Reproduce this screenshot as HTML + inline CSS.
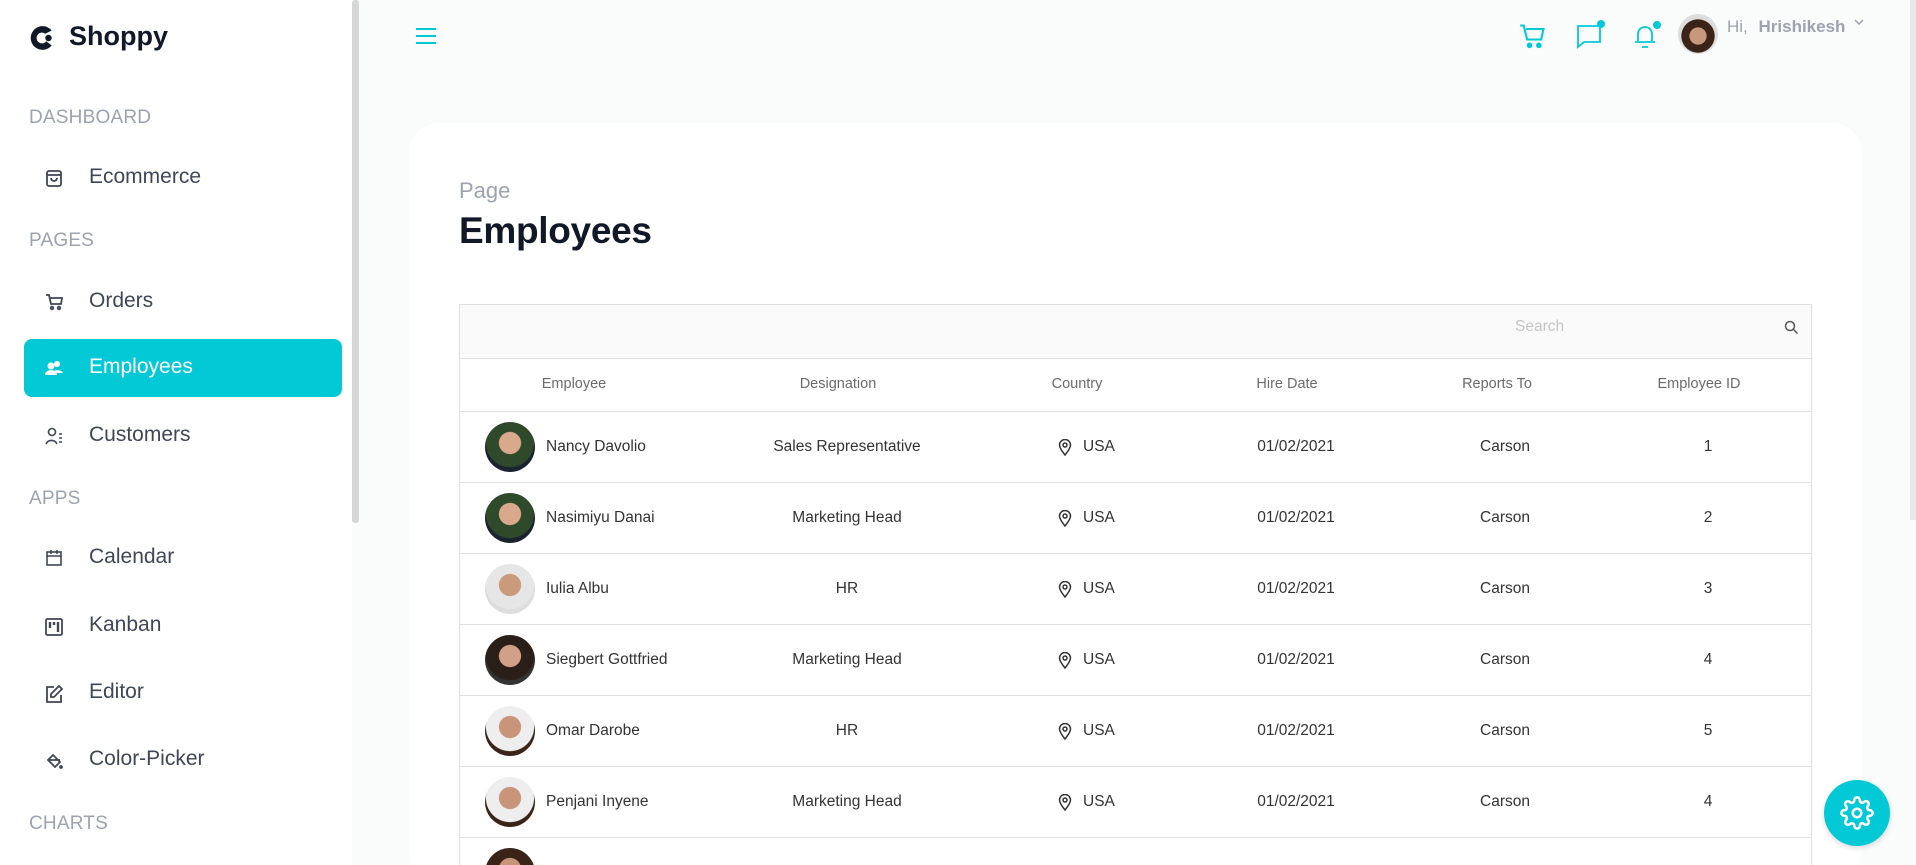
<!DOCTYPE html>
<html><head><meta charset="utf-8">
<style>
*{box-sizing:border-box;margin:0;padding:0}
html,body{width:1916px;height:865px;overflow:hidden}
body{background:#fafbfb;font-family:"Liberation Sans",sans-serif;position:relative}
.a{position:absolute}
#side{left:0;top:0;width:352px;height:865px;background:#fff}
.sb{left:352px;top:0;width:7px;height:523px;background:#d6d6d6;border-radius:3px}
.sec{left:29px;font-size:19px;color:#9ca3af;letter-spacing:.2px}
.it{left:89px;font-size:21px;color:#3f4656}
.ic{left:45px;width:18px;height:18px}
.card{left:409px;top:123px;width:1453px;height:760px;background:#fff;border-radius:30px}
.th{font-size:14.5px;color:#6b6b6b;text-align:center}
.td{font-size:15.5px;color:#333;text-align:center}
.hl{left:459px;width:1353px;height:1px;background:#e0e0e0}
.av{width:50px;height:50px;border-radius:50%}
</style></head><body>
<div id="side" class="a">
  <svg class="a" style="left:28px;top:25px" width="28" height="26" viewBox="0 0 26 24"><path d="M22 5A11 11 0 1 0 22 19L17 15A5 5 0 1 1 16 8Z" fill="#111827"/><circle cx="19" cy="12" r="3" fill="#111827"/></svg>
  <div class="a" style="left:69px;top:21px;font-size:27px;font-weight:bold;color:#111827">Shoppy</div>
  <div class="a sec" style="top:107px">DASHBOARD</div>
  <svg class="a ic" style="top:169px" viewBox="0 0 18 18" fill="none" stroke="#3f4656" stroke-width="1.8"><rect x="2" y="2" width="14" height="15" rx="2"/><path d="M2 6h14M6 9a3 3 0 0 0 6 0"/></svg>
  <div class="a it" style="top:165px">Ecommerce</div>
  <div class="a sec" style="top:230px">PAGES</div>
  <svg class="a ic" style="top:293px" viewBox="0 0 18 18" fill="none" stroke="#3f4656" stroke-width="1.8"><path d="M1 2h3l2 9h10l1-6H5"/><circle cx="7" cy="15" r="1.3"/><circle cx="14" cy="15" r="1.3"/></svg>
  <div class="a it" style="top:289px">Orders</div>
  <div class="a" style="left:24px;top:339px;width:318px;height:58px;background:#03c9d7;border-radius:8px"></div>
  <svg class="a ic" style="top:359px" viewBox="0 0 18 18" fill="#fff"><circle cx="6" cy="7" r="3.5"/><circle cx="12" cy="5" r="3"/><path d="M0 16a6 5 0 0 1 12 0Z"/><path d="M9 12a6 5 0 0 1 9 2h-7Z"/></svg>
  <div class="a it" style="top:355px;color:#fff">Employees</div>
  <svg class="a ic" style="top:427px" viewBox="0 0 18 18" fill="none" stroke="#3f4656" stroke-width="1.6"><circle cx="7" cy="5" r="3.5"/><path d="M1 17a6 6 0 0 1 11 0M14 7h3M14 11h3M14 15h3"/></svg>
  <div class="a it" style="top:423px">Customers</div>
  <div class="a sec" style="top:488px">APPS</div>
  <svg class="a ic" style="top:549px" viewBox="0 0 18 18" fill="none" stroke="#3f4656" stroke-width="1.6"><rect x="2" y="3" width="14" height="13"/><path d="M2 7h14M6 1v4M12 1v4"/></svg>
  <div class="a it" style="top:545px">Calendar</div>
  <svg class="a ic" style="top:618px" viewBox="0 0 18 18" fill="none" stroke="#3f4656" stroke-width="1.8"><rect x="1" y="1" width="16" height="16" rx="1.5"/><path d="M5 4v6M9 4v3M13 4v10" stroke-width="2.4"/></svg>
  <div class="a it" style="top:613px">Kanban</div>
  <svg class="a ic" style="top:685px" viewBox="0 0 18 18" fill="none" stroke="#3f4656" stroke-width="1.8"><path d="M9 2H2v15h14v-7M14 1l3 3-8 8H6V9Z"/></svg>
  <div class="a it" style="top:680px">Editor</div>
  <svg class="a ic" style="top:752px" viewBox="0 0 18 18" fill="none" stroke="#3f4656" stroke-width="1.8"><path d="M8 3l7 7-5 5-7-7ZM3 8h12"/><circle cx="16" cy="15" r="1" fill="#3f4656"/></svg>
  <div class="a it" style="top:747px">Color-Picker</div>
  <div class="a sec" style="top:813px">CHARTS</div>
</div>
<div class="a sb"></div>
<div class="a" style="left:1910px;top:0;width:6px;height:520px;background:#e8e8e8"></div>

<svg class="a" style="left:415px;top:26px" width="22" height="20" viewBox="0 0 22 20" stroke="#03c9d7" stroke-width="2"><path d="M1 3h20M1 10h20M1 17h20"/></svg>
<svg class="a" style="left:1519px;top:22px" width="28" height="28" viewBox="0 0 24 24" fill="none" stroke="#03c9d7" stroke-width="1.8"><path d="M1 3h3l3 12h12l2-9H6"/><circle cx="9" cy="20" r="1.5" fill="#03c9d7"/><circle cx="17" cy="20" r="1.5" fill="#03c9d7"/></svg>
<svg class="a" style="left:1576px;top:20px" width="32" height="30" viewBox="0 0 32 30" fill="none" stroke="#03c9d7" stroke-width="1.8"><path d="M2 6h22v16H8l-6 5Z"/><circle cx="25" cy="4" r="4" fill="#03c9d7" stroke="none"/></svg>
<svg class="a" style="left:1632px;top:20px" width="32" height="30" viewBox="0 0 32 30" fill="none" stroke="#03c9d7" stroke-width="1.8"><path d="M6 21V14a7 7 0 0 1 14 0v7M3 22h20M10 27h6"/><circle cx="25" cy="5" r="4" fill="#03c9d7" stroke="none"/></svg>
<div class="a" style="left:1678px;top:14px;width:40px;height:40px;border-radius:50%;background:radial-gradient(circle at 50% 55%,#c9977b 0 28%,#3a2418 30% 55%,#ddd 57%);"></div>
<div class="a" style="left:1727px;top:17px;font-size:17px;color:#9ca3af">Hi, <b style="margin-left:6px;color:#9ca3af">Hrishikesh</b></div>
<svg class="a" style="left:1853px;top:18px" width="12" height="8" viewBox="0 0 12 8" fill="none" stroke="#9ca3af" stroke-width="1.5"><path d="M2 2l4 4 4-4"/></svg>

<div class="a card"></div>
<div class="a" style="left:459px;top:178px;font-size:22px;color:#9ca3af">Page</div>
<div class="a" style="left:459px;top:210px;font-size:37px;font-weight:bold;color:#111827;letter-spacing:-.3px">Employees</div>

<div class="a" style="left:459px;top:304px;width:1353px;height:561px;border:1px solid #e0e0e0;border-bottom:none"></div>
<div class="a" style="left:460px;top:305px;width:1351px;height:53px;background:#fafafa"></div>
<div class="a hl" style="top:358px"></div>
<div class="a" style="left:1515px;top:318px;font-size:15.5px;color:#c4c4c4">Search</div>
<svg class="a" style="left:1784px;top:320px" width="15" height="15" viewBox="0 0 15 15" fill="none" stroke="#555" stroke-width="1.5"><circle cx="6" cy="6" r="4.5"/><path d="M9.5 9.5l4 4"/></svg>
<div class="a th" style="left:474px;top:376px;width:200px">Employee</div>
<div class="a th" style="left:738px;top:376px;width:200px">Designation</div>
<div class="a th" style="left:977px;top:376px;width:200px">Country</div>
<div class="a th" style="left:1187px;top:376px;width:200px">Hire Date</div>
<div class="a th" style="left:1397px;top:376px;width:200px">Reports To</div>
<div class="a th" style="left:1599px;top:376px;width:200px">Employee ID</div>
<div class="a hl" style="top:411px"></div>

<div id="rows"></div>
<script>
var d=[["Nancy Davolio","Sales Representative",1,"#2f4a2a,#d8a98c,#1b2230"],["Nasimiyu Danai","Marketing Head",2,"#2f4a2a,#d8a98c,#1b2230"],["Iulia Albu","HR",3,"#e6e6e6,#c99a7c,#ddd"],["Siegbert Gottfried","Marketing Head",4,"#2a1e18,#d0a088,#333"],["Omar Darobe","HR",5,"#eee,#c8957a,#3a2418"],["Penjani Inyene","Marketing Head",4,"#eee,#c8957a,#3a2418"]];
var h="";
d.forEach(function(r,i){var y=412+i*71;var c=r[3].split(",");
h+='<div class="a av" style="left:485px;top:'+(y+10)+'px;background:radial-gradient(circle at 50% 42%,'+c[1]+' 0 28%,'+c[0]+' 30% 62%,'+c[2]+' 64%)"></div>';
h+='<div class="a td" style="left:546px;top:'+(y+26)+'px;text-align:left">'+r[0]+'</div>';
h+='<div class="a td" style="left:747px;top:'+(y+26)+'px;width:200px">'+r[1]+'</div>';
h+='<svg class="a" style="left:1058px;top:'+(y+27)+'px" width="14" height="17" viewBox="0 0 14 17" fill="none" stroke="#333" stroke-width="1.5"><path d="M7 16C3 11 1.5 8.5 1.5 6a5.5 5.5 0 0 1 11 0C12.5 8.5 11 11 7 16Z"/><circle cx="7" cy="6" r="2"/></svg>';
h+='<div class="a td" style="left:1083px;top:'+(y+26)+'px">USA</div>';
h+='<div class="a td" style="left:1196px;top:'+(y+26)+'px;width:200px">01/02/2021</div>';
h+='<div class="a td" style="left:1405px;top:'+(y+26)+'px;width:200px">Carson</div>';
h+='<div class="a td" style="left:1608px;top:'+(y+26)+'px;width:200px">'+r[2]+'</div>';
h+='<div class="a hl" style="top:'+(y+70)+'px"></div>';});
h+='<div class="a av" style="left:485px;top:848px;background:radial-gradient(circle at 50% 42%,#c8957a 0 28%,#3a2418 30% 62%,#eee 64%)"></div>';
document.getElementById("rows").innerHTML=h;
</script>

<div class="a" style="left:1824px;top:780px;width:66px;height:66px;border-radius:50%;background:#03c9d7;box-shadow:0 2px 6px rgba(0,0,0,.15)"></div>
<svg class="a" style="left:1840px;top:796px" width="34" height="34" viewBox="0 0 24 24" fill="none" stroke="#fff" stroke-width="1.8"><circle cx="12" cy="12" r="3"/><path d="M19.4 15a1.650 1.65 0 0 0 .33 1.82l.06.06a2 2 0 1 1-2.830 2.83l-.06-.06a1.65 1.65 0 0 0-1.820-.33 1.65 1.65 0 0 0-1 1.51V21a2 2 0 1 1-4 0v-.09A1.65 1.65 0 0 0 9 19.4a1.65 1.65 0 0 0-1.82.33l-.06.06a2 2 0 1 1-2.83-2.83l.06-.06A1.65 1.65 0 0 0 4.68 15a1.65 1.65 0 0 0-1.51-1H3a2 2 0 1 1 0-4h.09A1.65 1.65 0 0 0 4.6 9a1.65 1.65 0 0 0-.33-1.82l-.06-.06a2 2 0 1 1 2.83-2.83l.06.06A1.65 1.65 0 0 0 9 4.68a1.65 1.65 0 0 0 1-1.51V3a2 2 0 1 1 4 0v.09a1.65 1.65 0 0 0 1 1.51 1.65 1.65 0 0 0 1.82-.33l.06-.06a2 2 0 1 1 2.83 2.83l-.06.06A1.65 1.65 0 0 0 19.4 9a1.65 1.65 0 0 0 1.51 1H21a2 2 0 1 1 0 4h-.09a1.65 1.65 0 0 0-1.51 1z"/></svg>
</body></html>
